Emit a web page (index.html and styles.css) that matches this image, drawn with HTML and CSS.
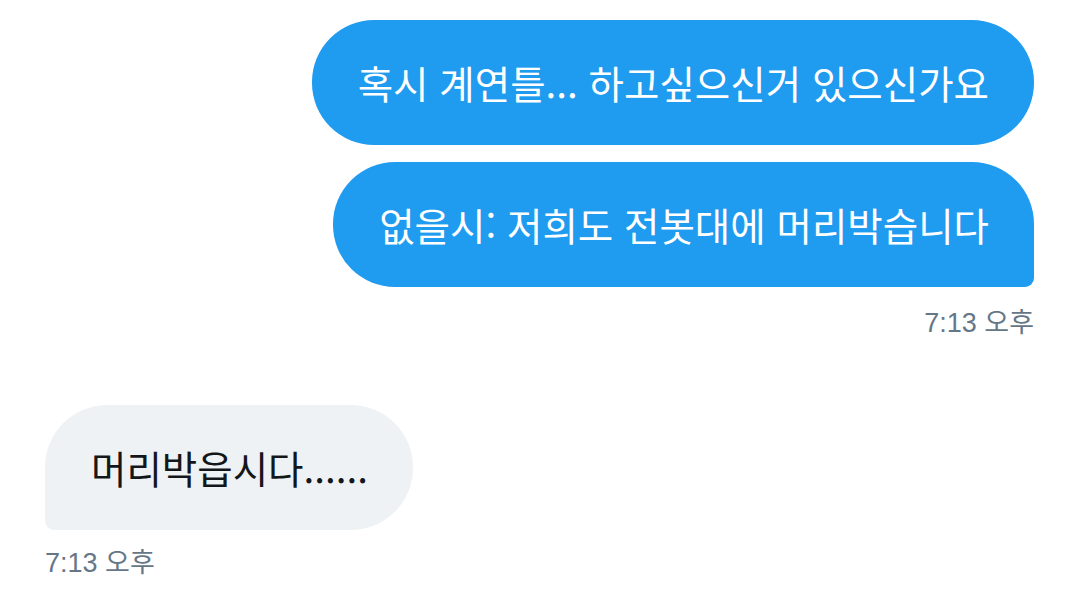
FILE: index.html
```html
<!DOCTYPE html>
<html lang="ko">
<head>
<meta charset="utf-8">
<link rel="stylesheet" href="styles.css">
</head>
<body>
<div class="chat">
  <div class="group sent">
    <div class="bubble blue first">혹시 계연틀... 하고싶으신거 있으신가요</div>
    <div class="bubble blue last">없을시: 저희도 전봇대에 머리박습니다</div>
    <div class="time">7:13 오후</div>
  </div>
  <div class="group recv">
    <div class="bubble gray">머리박읍시다......</div>
    <div class="time">7:13 오후</div>
  </div>
</div>
</body>
</html>
```
FILE: styles.css
```css
html, body {
  margin: 0;
  padding: 0;
  background: #ffffff;
}
body {
  width: 1080px;
  height: 604px;
  overflow: hidden;
  font-family: "Noto Sans CJK KR", "Noto Sans", sans-serif;
}
.chat {
  display: flex;
  flex-direction: column;
  padding: 20px 46px 0 45px;
}
.group {
  display: flex;
  flex-direction: column;
}
.sent {
  align-items: flex-end;
  gap: 17px;
}
.recv {
  align-items: flex-start;
  margin-top: 65px;
}
.bubble {
  font-size: 38.5px;
  line-height: 50px;
  padding: 37px 45px 38px 46px;
  border-radius: 62px;
  white-space: nowrap;
}
.blue {
  background: #1f9bef;
  color: #ffffff;
}
.blue.last {
  border-bottom-right-radius: 9px;
}
.gray {
  background: #eff2f4;
  color: #14171a;
  border-bottom-left-radius: 9px;
}
.time {
  font-family: "Liberation Sans", "Noto Sans CJK KR", sans-serif;
  font-size: 27px;
  line-height: 34px;
  color: #657786;
}
.sent .time {
  margin-top: 2px;
}
.recv .time {
  margin-top: 16px;
}
```
